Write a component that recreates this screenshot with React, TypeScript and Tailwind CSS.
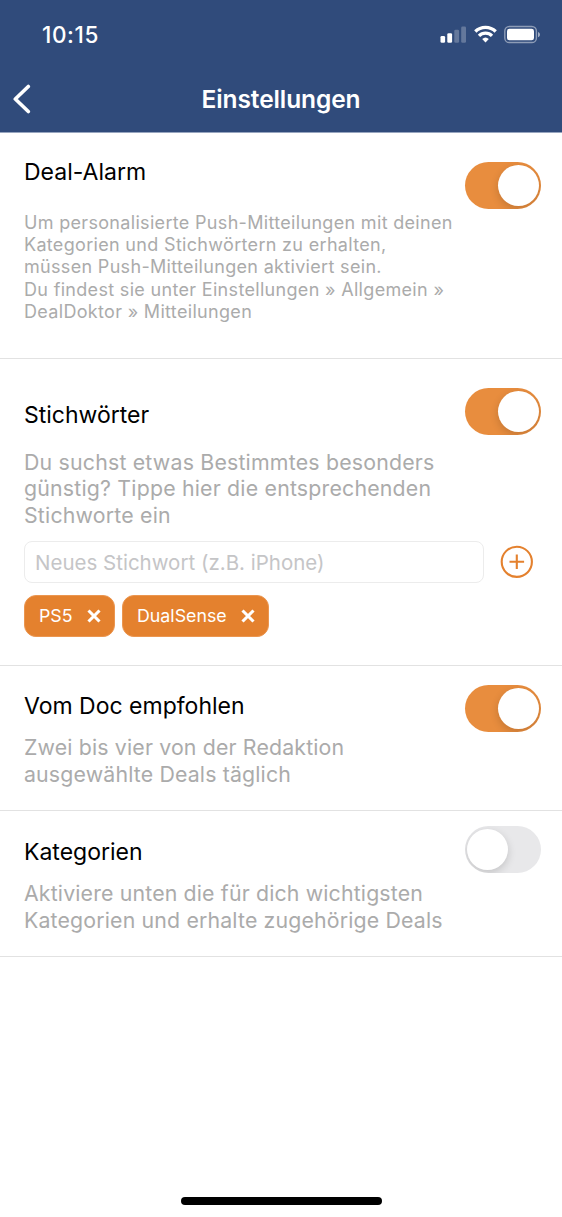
import React from "react";

type ToggleProps = {
	on: boolean;
};

type ChipProps = {
	text: string;
	className: string;
};

const Toggle: React.FC<ToggleProps> = ({ on }) => {
	return (
		<button
			role="switch"
			aria-checked={on}
			className={`flex h-[46.5px] w-[76.5px] shrink-0 items-start overflow-hidden rounded-full px-[2.5px] pt-[2.5px] ${on ? "justify-end bg-[#e88d3e]" : "justify-start bg-[#e8e8ea]"}`}
		>
			<span className="size-[41px] rounded-full bg-white shadow-[0_3px_9px_rgba(0,0,0,0.16)]"></span>
		</button>
	);
};

const Chip: React.FC<ChipProps> = ({ text, className }) => {
	return (
		<div className={`flex h-[42px] items-center justify-between rounded-[12px] border border-[#eb9650] bg-[#e4812e] pl-[14px] pr-[13px] text-white ${className}`}>
			<span className="text-[17.8px]">{text}</span>
			<svg width="14" height="14" viewBox="0 0 14 14" fill="none" stroke="currentColor" strokeWidth="3.1">
				<path d="M1.5 1.5 12.5 12.5M12.5 1.5 1.5 12.5" />
			</svg>
		</div>
	);
};

const StatusBar: React.FC = () => {
	return (
		<div className="flex h-[66px] items-start justify-between pl-[42px] pr-[21px] pt-[21px]">
			<span className="text-[22.5px] font-medium leading-[28px] tracking-[0.6px]">10:15</span>
			<div className="flex items-center pt-[3px]">
				<svg width="27" height="20" viewBox="0 0 27 20" fill="currentColor">
					<rect x="0.5" y="12" width="4.6" height="6.7" rx="1.3" />
					<rect x="7.3" y="9.2" width="4.8" height="9.5" rx="1.3" />
					<rect x="14.3" y="5.8" width="4.8" height="12.9" rx="1.3" opacity="0.25" />
					<rect x="21.2" y="2.6" width="4.8" height="16.1" rx="1.3" opacity="0.25" />
				</svg>
				<svg className="ml-[7px]" width="23" height="20" viewBox="0 0 23 20" fill="none" stroke="currentColor" strokeWidth="3.3">
					<path d="M1.3 7.5a14.6 14.6 0 0 1 20.4 0" />
					<path d="M5 11.8a9.2 9.2 0 0 1 13 0" />
					<path d="M8.2 15a4.8 4.8 0 0 1 6.6 0L11.5 18.4Z" fill="currentColor" stroke="none" />
				</svg>
				<svg className="ml-[7px]" width="37" height="20" viewBox="0 0 37 20">
					<rect x="0.8" y="2.5" width="31.6" height="16" rx="4.6" fill="none" stroke="#fff" strokeOpacity="0.45" strokeWidth="1.4" />
					<rect x="3" y="4.8" width="27" height="11.5" rx="2.4" fill="#fff" />
					<path d="M34 8c2.6.8 2.6 4.4 0 5.2Z" fill="#fff" fillOpacity="0.55" />
				</svg>
			</div>
		</div>
	);
};

const App: React.FC = () => {
	return (
		<div className="flex h-[1217px] w-[562px] flex-col bg-white font-['Inter',sans-serif] text-black">
			<header className="h-[133px] shrink-0 border-b border-[#97a5bf] bg-[#304b7b] text-white">
				<StatusBar />
				<div className="flex h-[66px] items-center">
					<button className="w-[60px] pl-[12px]" aria-label="Zurück">
						<svg width="20" height="30" viewBox="0 0 20 30" fill="none" stroke="currentColor" strokeWidth="3.6" strokeLinecap="round" strokeLinejoin="round">
							<path d="M16.3 2.5 3.3 15l13 12.5" />
						</svg>
					</button>
					<h1 className="flex-1 pr-[60px] text-center text-[24.5px] font-semibold tracking-[-0.1px]">Einstellungen</h1>
				</div>
			</header>

			<section className="flex h-[226px] shrink-0 items-start justify-between border-b border-[#e2e2e2] pl-6 pr-[21px]">
				<div className="whitespace-nowrap pt-[25px]">
					<h2 className="text-[23px] leading-[28px]">Deal-Alarm</h2>
					<p className="mt-[25.5px] text-[18px] leading-[22.4px] tracking-[0.32px] text-[#ababab]">
						Um personalisierte Push-Mitteilungen mit deinen
						<br />
						Kategorien und Stichwörtern zu erhalten,
						<br />
						müssen Push-Mitteilungen aktiviert sein.
						<br />
						Du findest sie unter Einstellungen » Allgemein »
						<br />
						DealDoktor » Mitteilungen
					</p>
				</div>
				<div className="pt-[29px]">
					<Toggle on={true} />
				</div>
			</section>

			<section className="h-[307px] shrink-0 border-b border-[#e2e2e2]">
				<div className="flex h-[182px] items-start justify-between pl-6 pr-[21px]">
					<div className="whitespace-nowrap pt-[42px]">
						<h2 className="text-[23px] leading-[28px]">Stichwörter</h2>
						<p className="mt-[19.5px] text-[21.3px] leading-[26.8px] tracking-[0.2px] text-[#ababab]">
							Du suchst etwas Bestimmtes besonders
							<br />
							günstig? Tippe hier die entsprechenden
							<br />
							Stichworte ein
						</p>
					</div>
					<div className="pt-[29px]">
						<Toggle on={true} />
					</div>
				</div>
				<div className="flex items-center pl-6">
					<input
						className="h-[42px] w-[460px] rounded-[8px] border-[1.5px] border-[#ececec] px-[10px] text-[20.5px] placeholder:text-[#c5c5c7]"
						placeholder="Neues Stichwort (z.B. iPhone)"
					/>
					<button className="ml-4 text-[#e4812e]" aria-label="Hinzufügen">
						<svg width="34" height="34" viewBox="0 0 34 34" fill="none" stroke="currentColor" strokeWidth="2.1">
							<circle cx="16.8" cy="16.8" r="15.1" />
							<path d="M9.5 16.8h14.6M16.8 9.5v14.6" />
						</svg>
					</button>
				</div>
				<div className="mt-3 flex gap-[7px] pl-6">
					<Chip text="PS5" className="w-[91px]" />
					<Chip text="DualSense" className="w-[147px]" />
				</div>
			</section>

			<section className="flex h-[145px] shrink-0 items-start justify-between border-b border-[#e2e2e2] pl-6 pr-[21px]">
				<div className="whitespace-nowrap pt-[26px]">
					<h2 className="text-[23px] leading-[28px]">Vom Doc empfohlen</h2>
					<p className="mt-[14px] text-[21.3px] leading-[26.8px] tracking-[0.16px] text-[#ababab]">
						Zwei bis vier von der Redaktion
						<br />
						ausgewählte Deals täglich
					</p>
				</div>
				<div className="pt-[19px]">
					<Toggle on={true} />
				</div>
			</section>

			<section className="flex h-[146px] shrink-0 items-start justify-between border-b border-[#e2e2e2] pl-6 pr-[21px]">
				<div className="whitespace-nowrap pt-[27px]">
					<h2 className="text-[23px] leading-[28px]">Kategorien</h2>
					<p className="mt-[14px] text-[21.3px] leading-[26.8px] tracking-[0.16px] text-[#ababab]">
						Aktiviere unten die für dich wichtigsten
						<br />
						Kategorien und erhalte zugehörige Deals
					</p>
				</div>
				<div className="pt-[15px]">
					<Toggle on={false} />
				</div>
			</section>

			<div className="mt-auto flex justify-center pb-3">
				<div className="h-[8px] w-[201px] rounded-full bg-black"></div>
			</div>
		</div>
	);
};

export default App;
